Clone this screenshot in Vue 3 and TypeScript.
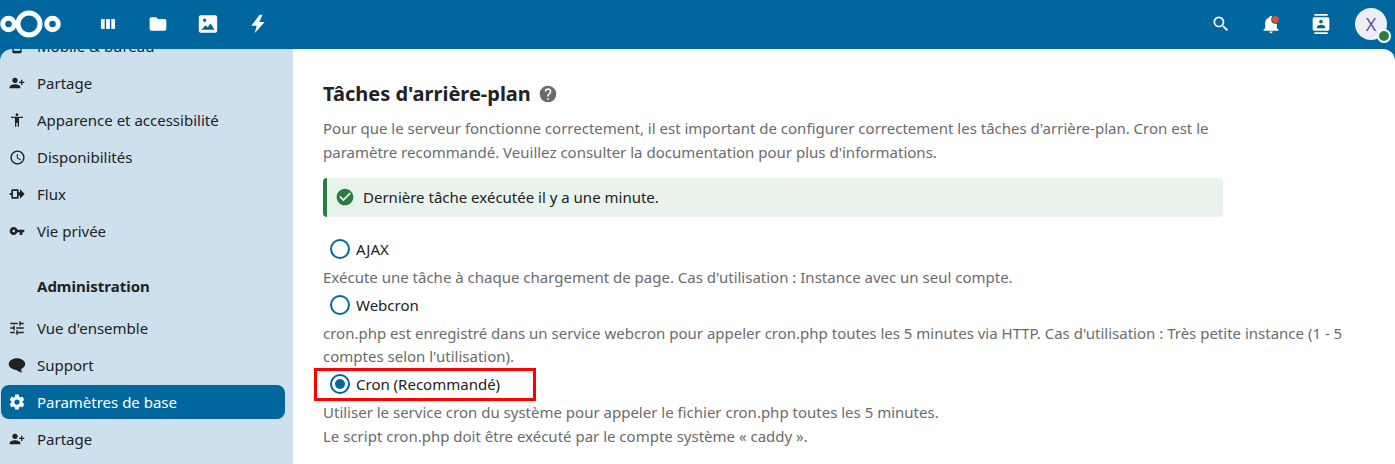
<script setup lang="ts">
interface NavItem {
  label: string
  path: string
  active?: boolean
  mirror?: boolean
  size?: number
}
const cog = 'M12,15.5A3.5,3.5 0 0,1 8.5,12A3.5,3.5 0 0,1 12,8.5A3.5,3.5 0 0,1 15.5,12A3.5,3.5 0 0,1 12,15.5M19.43,12.97C19.47,12.65 19.5,12.33 19.5,12C19.5,11.67 19.47,11.34 19.43,11L21.54,9.37C21.73,9.22 21.78,8.95 21.66,8.73L19.66,5.27C19.54,5.05 19.27,4.96 19.05,5.05L16.56,6.05C16.04,5.66 15.5,5.32 14.87,5.07L14.5,2.42C14.46,2.18 14.25,2 14,2H10C9.75,2 9.54,2.18 9.5,2.42L9.13,5.07C8.5,5.32 7.96,5.66 7.44,6.05L4.95,5.05C4.73,4.96 4.46,5.05 4.34,5.27L2.34,8.73C2.21,8.95 2.27,9.22 2.46,9.37L4.57,11C4.53,11.34 4.5,11.67 4.5,12C4.5,12.33 4.53,12.65 4.57,12.97L2.46,14.63C2.27,14.78 2.21,15.05 2.34,15.27L4.34,18.73C4.46,18.95 4.73,19.03 4.95,18.95L7.44,17.94C7.96,18.34 8.5,18.68 9.13,18.93L9.5,21.58C9.54,21.82 9.75,22 10,22H14C14.25,22 14.46,21.82 14.5,21.58L14.87,18.93C15.5,18.67 16.04,18.34 16.56,17.94L19.05,18.95C19.27,19.03 19.54,18.95 19.66,18.73L21.66,15.27C21.78,15.05 21.73,14.78 21.54,14.63L19.43,12.97Z'
const share = 'M15,14C12.33,14 7,15.33 7,18V20H23V18C23,15.33 17.67,14 15,14M6,10V7H4V10H1V12H4V15H6V12H9V10M15,12A4,4 0 0,0 19,8A4,4 0 0,0 15,4A4,4 0 0,0 11,8A4,4 0 0,0 15,12Z'
const personal: NavItem[] = [
  { label: 'Mobile & bureau', path: 'M17,19H7V5H17M17,1H7C5.89,1 5,1.89 5,3V21A2,2 0 0,0 7,23H17A2,2 0 0,0 19,21V3C19,1.89 18.1,1 17,1Z' },
  { label: 'Partage', path: share, mirror: true },
  { label: 'Apparence et accessibilité', path: 'M21 9H15V22H13V16H11V22H9V9H3V7H21M12 2A2 2 0 0 1 14 4A2 2 0 0 1 12 6C10.89 6 10 5.1 10 4C10 2.89 10.89 2 12 2Z' },
  { label: 'Disponibilités', path: 'M12,20A8,8 0 0,0 20,12A8,8 0 0,0 12,4A8,8 0 0,0 4,12A8,8 0 0,0 12,20M12,2A10,10 0 0,1 22,12A10,10 0 0,1 12,22C6.47,22 2,17.5 2,12A10,10 0 0,1 12,2M12.5,7V12.25L17,14.92L16.25,16.15L11,13V7H12.5Z', size: 17 },
  { label: 'Flux', path: 'M1 10.5H3.5V6.5A1.5 1.5 0 0 1 5 5H13A1.5 1.5 0 0 1 14.5 6.5V9.5H16.5V5L23.5 12L16.5 19V14.5H14.5V17.5A1.5 1.5 0 0 1 13 19H5A1.5 1.5 0 0 1 3.5 17.5V13.5H1ZM6 7.5V16.5H12V7.5Z' },
  { label: 'Vie privée', path: 'M7 14C5.9 14 5 13.1 5 12S5.9 10 7 10 9 10.9 9 12 8.1 14 7 14M12.6 10C11.8 7.7 9.6 6 7 6C3.7 6 1 8.7 1 12S3.7 18 7 18C9.6 18 11.8 16.3 12.6 14H16V18H20V14H23V10H12.6Z' }
]
const admin: NavItem[] = [
  { label: "Vue d'ensemble", path: 'M3,17V19H9V17H3M3,5V7H13V5H3M13,21V19H21V17H13V15H11V21H13M7,9V11H3V13H7V15H9V9H7M21,13V11H11V13H21M15,9H17V7H21V5H17V3H15V9Z', size: 18 },
  { label: 'Support', path: 'M12 3C6 3 1 6.4 1 10.8C1 15 5.5 18.4 11 18.6C13 19.8 16 21.6 19 22C18 20.8 17.6 19 17.6 17.4C20.9 16 23 13.6 23 10.8C23 6.4 18 3 12 3Z', size: 18 },
  { label: 'Paramètres de base', path: cog, active: true, size: 18 },
  { label: 'Partage', path: share, mirror: true }
]
const topApps = [
  'M3.5 7.5A1.5 1.5 0 0 1 5 6H8V18H5A1.5 1.5 0 0 1 3.5 16.5ZM9.8 6H14.2V18H9.8ZM16 6H19A1.5 1.5 0 0 1 20.5 7.5V16.5A1.5 1.5 0 0 1 19 18H16Z',
  'M10,4H4C2.89,4 2,4.89 2,6V18A2,2 0 0,0 4,20H20A2,2 0 0,0 22,18V8C22,6.89 21.1,6 20,6H12L10,4Z',
  'M3.5 1.5H20.5A2.5 2.5 0 0 1 23 4V20A2.5 2.5 0 0 1 20.5 22.5H3.5A2.5 2.5 0 0 1 1 20V4A2.5 2.5 0 0 1 3.5 1.5ZM8 5.5A2 2 0 1 0 8 9.5A2 2 0 1 0 8 5.5ZM4 19H20L15 11.5L11.5 16L9 13.5Z',
  'M14 1L4 14H10.5L8 23L20 9.5H13.5L17.5 1Z'
]
const rightIcons = {
  search: 'M9.5,3A6.5,6.5 0 0,1 16,9.5C16,11.11 15.41,12.59 14.44,13.73L14.71,14H15.5L20.5,19L19,20.5L14,15.5V14.71L13.73,14.44C12.59,15.41 11.11,16 9.5,16A6.5,6.5 0 0,1 3,9.5A6.5,6.5 0 0,1 9.5,3M9.5,5C7,5 5,7 5,9.5C5,12 7,14 9.5,14C12,14 14,12 14,9.5C14,7 12,5 9.5,5Z',
  bell: 'M21,19V20H3V19L5,17V11C5,7.9 7.03,5.17 10,4.29C10,4.19 10,4.1 10,4A2,2 0 0,1 12,2A2,2 0 0,1 14,4C14,4.1 14,4.19 14,4.29C16.97,5.17 19,7.9 19,11V17L21,19M14,21A2,2 0 0,1 12,23A2,2 0 0,1 10,21',
  contacts: 'M20,0H4V2H20V0M4,24H20V22H4V24M20,4H4C2.9,4 2,4.9 2,6V18C2,19.1 2.9,20 4,20H20C21.1,20 22,19.1 22,18V6C22,4.9 21.1,4 20,4M12,6.75C13.24,6.75 14.25,7.76 14.25,9C14.25,10.24 13.24,11.25 12,11.25C10.76,11.25 9.75,10.24 9.75,9C9.75,7.76 10.76,6.75 12,6.75M17,17H7V15.5C7,13.83 10.33,13 12,13C13.67,13 17,13.83 17,15.5V17Z'
}
const help = 'M15.07,11.25L14.17,12.17C13.45,12.89 13,13.5 13,15H11V14.5C11,13.39 11.45,12.39 12.17,11.67L13.41,10.41C13.78,10.05 14,9.55 14,9C14,7.89 13.1,7 12,7A2,2 0 0,0 10,9H8A4,4 0 0,1 12,5A4,4 0 0,1 16,9C16,9.88 15.64,10.67 15.07,11.25M13,19H11V17H13M12,2A10,10 0 0,0 2,12A10,10 0 0,0 12,22A10,10 0 0,0 22,12C22,6.47 17.5,2 12,2Z'
const check = 'M12 2C6.5 2 2 6.5 2 12S6.5 22 12 22 22 17.5 22 12 17.5 2 12 2M10 17L5 12L6.41 10.59L10 14.17L17.59 6.58L19 8L10 17Z'
</script>

<template>
  <div class="page">
    <header class="topbar">
      <svg class="logo" width="62" height="48" viewBox="0 0 62 48" aria-label="Nextcloud">
        <circle cx="8.5" cy="24" r="5.8" />
        <circle cx="29" cy="24" r="11" />
        <circle cx="52.5" cy="24" r="5.8" />
      </svg>
      <nav class="apps">
        <span v-for="(p, i) in topApps" :key="i" class="app">
          <svg width="20" height="20" viewBox="0 0 24 24"><path :d="p" /></svg>
        </span>
      </nav>
      <div class="right">
        <span class="hicon"><svg width="20" height="20" viewBox="0 0 24 24"><path :d="rightIcons.search" /></svg></span>
        <span class="hicon bell">
          <svg width="20" height="20" viewBox="0 0 24 24"><path :d="rightIcons.bell" /></svg>
          <i class="bell-dot"></i>
        </span>
        <span class="hicon"><svg width="20" height="20" viewBox="0 0 24 24"><path :d="rightIcons.contacts" /></svg></span>
        <span class="avatar">X<i class="status"></i></span>
      </div>
    </header>
    <div class="body">
      <aside class="sidebar">
        <ul class="nav first">
          <li v-for="item in personal" :key="item.label" class="nav-item">
            <span class="nav-icon"><svg :width="item.size ?? 16" :height="item.size ?? 16" viewBox="0 0 24 24"><path :d="item.path" :class="{ mirror: item.mirror }" /></svg></span>
            <span>{{ item.label }}</span>
          </li>
        </ul>
        <div class="nav-title">Administration</div>
        <ul class="nav">
          <li v-for="item in admin" :key="item.label" class="nav-item" :class="{ active: item.active }">
            <span class="nav-icon"><svg :width="item.size ?? 16" :height="item.size ?? 16" viewBox="0 0 24 24"><path :d="item.path" :class="{ mirror: item.mirror }" /></svg></span>
            <span>{{ item.label }}</span>
          </li>
        </ul>
      </aside>
      <main class="main">
        <div class="heading">
          <h2>Tâches d'arrière-plan</h2>
          <svg width="20" height="20" viewBox="0 0 24 24"><path :d="help" /></svg>
        </div>
        <p class="desc intro">Pour que le serveur fonctionne correctement, il est important de configurer correctement les tâches d'arrière-plan. Cron est le paramètre recommandé. Veuillez consulter la documentation pour plus d'informations.</p>
        <div class="note">
          <svg width="20" height="20" viewBox="0 0 24 24"><path :d="check" /></svg>
          <span>Dernière tâche exécutée il y a une minute.</span>
        </div>
        <div class="radio"><i class="dot"></i><span>AJAX</span></div>
        <p class="desc">Exécute une tâche à chaque chargement de page. Cas d'utilisation : Instance avec un seul compte.</p>
        <div class="radio"><i class="dot"></i><span>Webcron</span></div>
        <p class="desc">cron.php est enregistré dans un service webcron pour appeler cron.php toutes les 5 minutes via HTTP. Cas d'utilisation : Très petite instance (1 - 5 comptes selon l'utilisation).</p>
        <div class="radio marked"><i class="dot on"></i><span>Cron (Recommandé)</span></div>
        <p class="desc">Utiliser le service cron du système pour appeler le fichier cron.php toutes les 5 minutes.<br />Le script cron.php doit être exécuté par le compte système « caddy ».</p>
      </main>
    </div>
  </div>
</template>

<style>
html, body { margin: 0; background: #00679e; }
</style>

<style scoped>
* { box-sizing: border-box; }
.page {
  width: 1395px;
  height: 464px;
  overflow: hidden;
  background: #00679e;
  font-family: "Noto Sans", sans-serif;
  font-size: 15px;
  color: #222;
  display: flex;
  flex-direction: column;
}
.topbar { height: 49px; flex: none; display: flex; align-items: flex-start; color: #fff; }
.logo { flex: none; fill: none; stroke: #fff; stroke-width: 5; }
.apps { display: flex; margin-left: 21px; }
.app { width: 50px; height: 48px; display: flex; align-items: center; justify-content: center; }
.app svg, .hicon svg { fill: #fff; }
.right { margin-left: auto; display: flex; align-items: center; height: 48px; padding-right: 8px; }
.hicon { width: 50px; height: 48px; display: flex; align-items: center; justify-content: center; position: relative; }
.bell-dot {
  position: absolute; left: 25px; top: 15px; width: 9px; height: 9px; border-radius: 50%;
  background: #e9502a; border: 1px solid #00679e;
}
.avatar {
  width: 32px; height: 32px; margin-left: 9px; border-radius: 50%;
  background: #eeeef9; color: #5b54a6; font-size: 18px;
  display: flex; align-items: center; justify-content: center; position: relative;
}
.status {
  position: absolute; right: -4px; bottom: -3px; width: 14px; height: 14px; border-radius: 50%;
  background: #2d7b41; border: 2px solid #fff;
}
.body { flex: 1; display: flex; min-height: 0; }
.sidebar {
  width: 293px; flex: none; overflow: hidden; background: #cce0ed;
  border-top-left-radius: 12px; padding-left: 1px;
}
.nav { list-style: none; margin: 0; padding: 0; display: flex; flex-direction: column; gap: 3px; }
.nav.first { margin-top: -20px; }
.nav-item {
  width: 284px; height: 34px; border-radius: 8px; padding-left: 6px;
  display: flex; align-items: center; gap: 10px; line-height: 34px;
}
.nav-icon { width: 20px; flex: none; display: flex; align-items: center; justify-content: center; }
.nav-item svg { flex: none; fill: #222; }
.mirror { transform: scaleX(-1); transform-origin: center; }
.nav-item.active { background: #00679e; color: #fff; }
.nav-item.active svg { fill: #fff; }
.nav-title { height: 34px; margin-top: 21px; margin-bottom: 8px; padding-left: 36px; line-height: 34px; font-weight: 700; }
.main {
  flex: 1; min-width: 0; background: #fff; border-top-right-radius: 12px;
  padding: 30px 50px 0 30px; overflow: hidden;
}
.heading { display: flex; align-items: center; gap: 7px; height: 30px; }
.heading h2 { margin: 0; font-size: 20px; font-weight: 700; color: #222; line-height: 30px; }
.heading svg { fill: #6b6b6b; }
.desc { margin: 0; color: #6b6b6b; line-height: 23.5px; }
.intro { margin-top: 8px; max-width: 900px; }
.note {
  width: 900px; height: 39px; margin-top: 14px; background: #e9f2eb;
  border-left: 4px solid #2d7b41; border-radius: 4px;
  display: flex; align-items: center; gap: 8px; padding: 0 0 1px 8px; color: #222;
}
.note svg { fill: #2d7b41; flex: none; }
.radio { height: 32.5px; display: flex; align-items: center; gap: 6px; padding-left: 7px; color: #222; }
.note + .radio { margin-top: 16px; }
.dot { width: 20px; height: 20px; border-radius: 50%; border: 2px solid #00679e; flex: none; position: relative; background: #fff; }
.dot.on::after { content: ""; position: absolute; inset: 3px; border-radius: 50%; background: #00679e; }
.marked { position: relative; margin-top: -0.75px; margin-bottom: 0.75px; }
.marked::after {
  content: ""; box-sizing: border-box; position: absolute; left: -9px; top: 0; width: 222px; height: 33px;
  border: 3px solid #f00;
}
</style>
